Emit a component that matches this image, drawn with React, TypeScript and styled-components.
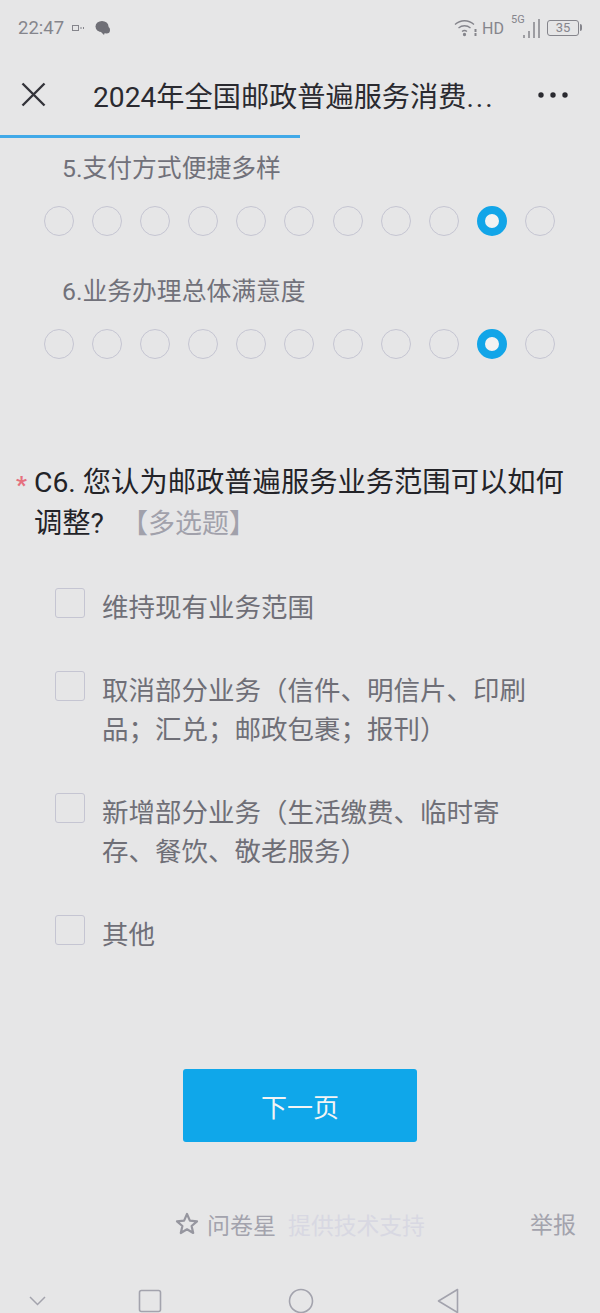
import React from 'react'
import styled, { createGlobalStyle } from 'styled-components'

const GlobalStyle = createGlobalStyle`
  html, body {
    margin: 0;
    padding: 0;
    background: #e6e6e7;
  }
  * { box-sizing: border-box; }
`

const Page = styled.div`
  width: 600px;
  height: 1313px;
  overflow: hidden;
  background: #e6e6e7;
  font-family: "Roboto", "Noto Sans CJK SC", sans-serif;
  display: flex;
  flex-direction: column;
  & > * { flex: none; }
`

const StatusBar = styled.div`
  height: 56px;
  padding: 0 21px 0 18px;
  display: flex;
  align-items: center;
  color: #85858c;
`

const Time = styled.span`
  font-size: 18.5px;
  width: 47px;
`

const StatusLeft = styled.div`
  display: flex;
  align-items: center;
  gap: 7px;
  flex: 1;
`

const StatusRight = styled.div`
  display: flex;
  align-items: center;
  gap: 3px;
`

const Hd = styled.span`
  font-size: 16px;
  margin: 0 4px 0 1px;
`

const Net = styled.div`
  position: relative;
  width: 30px;
  height: 22px;
  margin-right: 3px;
`

const NetLabel = styled.span`
  position: absolute;
  left: 0;
  top: -3px;
  font-size: 11px;
  line-height: 12px;
`

const Battery = styled.div`
  width: 32px;
  height: 16px;
  border: 1.5px solid #85858c;
  border-radius: 3px;
  font-size: 13px;
  line-height: 13px;
  text-align: center;
  position: relative;
  &::after {
    content: '';
    position: absolute;
    right: -4px;
    top: 3px;
    width: 2px;
    height: 7px;
    background: #85858c;
    border-radius: 0 2px 2px 0;
  }
`

const Header = styled.div`
  height: 79px;
  padding: 0 32px 2px 21px;
  display: flex;
  align-items: center;
`

const Title = styled.div`
  flex: 1;
  margin-left: 47px;
  font-size: 28.2px;
  color: #2a2a30;
  white-space: nowrap;
`

const TitleDots = styled.span`
  letter-spacing: 2px;
`

const Progress = styled.div`
  width: 300px;
  height: 3px;
  background: #41a9e8;
`

const RatingGroup = styled.div`
  padding-top: 14px;
`

const Rating = styled.div`
  padding-left: 44px;
  margin-bottom: 39px;
`

const RatingLabel = styled.div`
  font-size: 24.8px;
  line-height: 34px;
  color: #71717a;
  margin: 0 0 20px 18px;
`

const Dots = styled.div`
  display: flex;
  gap: 18.1px;
`

const Dot = styled.div<{ $on?: boolean }>`
  width: 30px;
  height: 30px;
  border-radius: 50%;
  border: ${p => (p.$on ? '8px solid #12a5e8' : '1.5px solid #c5c5d2')};
  background: ${p => (p.$on ? '#f2f2f2' : 'transparent')};
`

const Question = styled.div`
  position: relative;
  margin-top: 64px;
  padding: 0 30px 0 34px;
  font-size: 28.3px;
  line-height: 41px;
  color: #232328;
`

const Star = styled.span`
  position: absolute;
  left: 16px;
  top: 3px;
  font-size: 24px;
  font-weight: 700;
  color: #e5707e;
`

const Tag = styled.span`
  color: #a1a1ab;
  font-size: 27px;
  line-height: 1;
  margin-left: 17px;
`

const Options = styled.div`
  margin-top: 44px;
  padding: 0 60px 0 55px;
  display: flex;
  flex-direction: column;
  gap: 44px;
`

const Option = styled.div`
  display: flex;
  gap: 17px;
  align-items: flex-start;
`

const Box = styled.div`
  flex: none;
  width: 30px;
  height: 30px;
  border: 1.5px solid #c5c5d2;
  border-radius: 3px;
`

const OptionText = styled.div`
  font-size: 26.5px;
  line-height: 39px;
  color: #6f6f77;
`

const NextButton = styled.button`
  display: block;
  width: 234px;
  height: 73px;
  margin: 115px auto 0;
  border: none;
  border-radius: 3px;
  background: #0fa7ea;
  color: #f4f4f4;
  font-family: inherit;
  font-size: 26px;
`

const Footer = styled.div`
  margin-top: 65px;
  height: 34px;
  position: relative;
  display: flex;
  justify-content: center;
  align-items: center;
  font-size: 23px;
  color: #a3a3ad;
`

const Brand = styled.span`
  margin: 0 12px 0 8px;
`

const Support = styled.span`
  font-size: 22.8px;
  color: #d8d8e2;
`

const Report = styled.span`
  position: absolute;
  right: 24px;
  top: -1px;
`

const NavBar = styled.div`
  margin-top: 44px;
  padding: 0 0 0 29px;
  display: flex;
  align-items: center;
  height: 32px;
`

const NavSlot = styled.div<{ $w: number }>`
  width: ${p => p.$w}px;
  display: flex;
`

const SCALE = Array.from({ length: 11 }, (_, i) => i)

const ratings = [
  { label: '5.支付方式便捷多样', value: 9 },
  { label: '6.业务办理总体满意度', value: 9 },
]

const options = [
  '维持现有业务范围',
  '取消部分业务（信件、明信片、印刷品；汇兑；邮政包裹；报刊）',
  '新增部分业务（生活缴费、临时寄存、餐饮、敬老服务）',
  '其他',
]

const App = () => {
  return (
    <Page>
      <GlobalStyle />
      <StatusBar>
        <StatusLeft>
          <Time>22:47</Time>
          <svg width="16" height="8" viewBox="0 0 16 8" fill="none" stroke="#85858c" strokeWidth="1">
            <rect x="0.500" y="1.500" width="6" height="5" />
            <path d="M9 3v2M11.500 3v2" />
          </svg>
          <svg width="16" height="16" viewBox="0 0 16 16" fill="#6f6f76">
            <ellipse cx="7" cy="6.500" rx="6.500" ry="5.500" />
            <circle cx="11.500" cy="10" r="3.500" />
            <path d="M5 11l4 4 1-3z" />
          </svg>
        </StatusLeft>
        <StatusRight>
          <svg width="24" height="20" viewBox="0 0 24 20" fill="none" stroke="#85858c" strokeWidth="1.300">
            <path d="M1 6.500C6.500 1.500 14.500 1.500 20 6.500" />
            <path d="M4.500 10C8 7 13 7 16.500 10" />
            <path d="M8 13.500C9.500 12.300 11.500 12.300 13 13.500" />
            <circle cx="10.500" cy="16.500" r="1" fill="#85858c" />
            <path d="M21.500 11v3M21.500 15v3" strokeWidth="2" />
          </svg>
          <Hd>HD</Hd>
          <Net>
            <NetLabel>5G</NetLabel>
            <svg width="30" height="22" viewBox="0 0 30 22" fill="none" stroke="#85858c" strokeWidth="1.500">
              <path d="M13 21v-3M18 21v-7M23 21V5M28 21V2" />
            </svg>
          </Net>
          <Battery>35</Battery>
        </StatusRight>
      </StatusBar>

      <Header>
        <svg width="25" height="25" viewBox="0 0 25 25" fill="none" stroke="#33333a" strokeWidth="2.400">
          <path d="M1.500 1.500L23.500 23.500M23.500 1.500L1.500 23.500" />
        </svg>
        <Title>2024年全国邮政普遍服务消费<TitleDots>...</TitleDots></Title>
        <svg width="30" height="6" viewBox="0 0 30 6" fill="#2a2a30">
          <circle cx="3" cy="3" r="2.700" />
          <circle cx="15" cy="3" r="2.700" />
          <circle cx="27" cy="3" r="2.700" />
        </svg>
      </Header>
      <Progress />

      <RatingGroup>
        {ratings.map(r => (
          <Rating key={r.label}>
            <RatingLabel>{r.label}</RatingLabel>
            <Dots>
              {SCALE.map(i => (
                <Dot key={i} $on={i === r.value} />
              ))}
            </Dots>
          </Rating>
        ))}
      </RatingGroup>

      <Question>
        <Star>*</Star>
        C6. 您认为邮政普遍服务业务范围可以如何调整?<Tag>【多选题】</Tag>
      </Question>

      <Options>
        {options.map(o => (
          <Option key={o}>
            <Box />
            <OptionText>{o}</OptionText>
          </Option>
        ))}
      </Options>

      <NextButton>下一页</NextButton>

      <Footer>
        <svg width="24" height="24" viewBox="0 0 24 24" fill="none" stroke="#96969f" strokeWidth="2.200" strokeLinejoin="round">
          <path d="M12 2l2.900 6.600 7.100.7-5.400 4.700 1.600 7L12 17.300 5.800 21l1.600-7L2 9.300l7.100-.7z" />
        </svg>
        <Brand>问卷星</Brand>
        <Support>提供技术支持</Support>
        <Report>举报</Report>
      </Footer>

      <NavBar>
        <NavSlot $w={109}>
          <svg width="17" height="10" viewBox="0 0 17 10" fill="none" stroke="#a3a3ad" strokeWidth="1.500">
            <path d="M1 1l7.500 7.500L16 1" />
          </svg>
        </NavSlot>
        <NavSlot $w={150}>
          <svg width="24" height="24" viewBox="0 0 24 24" fill="none" stroke="#a3a3ad" strokeWidth="1.600">
            <rect x="1.500" y="1.500" width="21" height="21" rx="2" />
          </svg>
        </NavSlot>
        <NavSlot $w={149}>
          <svg width="26" height="26" viewBox="0 0 26 26" fill="none" stroke="#a3a3ad" strokeWidth="1.600">
            <circle cx="13" cy="13" r="11.500" />
          </svg>
        </NavSlot>
        <NavSlot $w={24}>
          <svg width="22" height="26" viewBox="0 0 22 26" fill="none" stroke="#a3a3ad" strokeWidth="1.600" strokeLinejoin="round">
            <path d="M20.500 1.500v23L1.500 13z" />
          </svg>
        </NavSlot>
      </NavBar>
    </Page>
  )
}

export default App
